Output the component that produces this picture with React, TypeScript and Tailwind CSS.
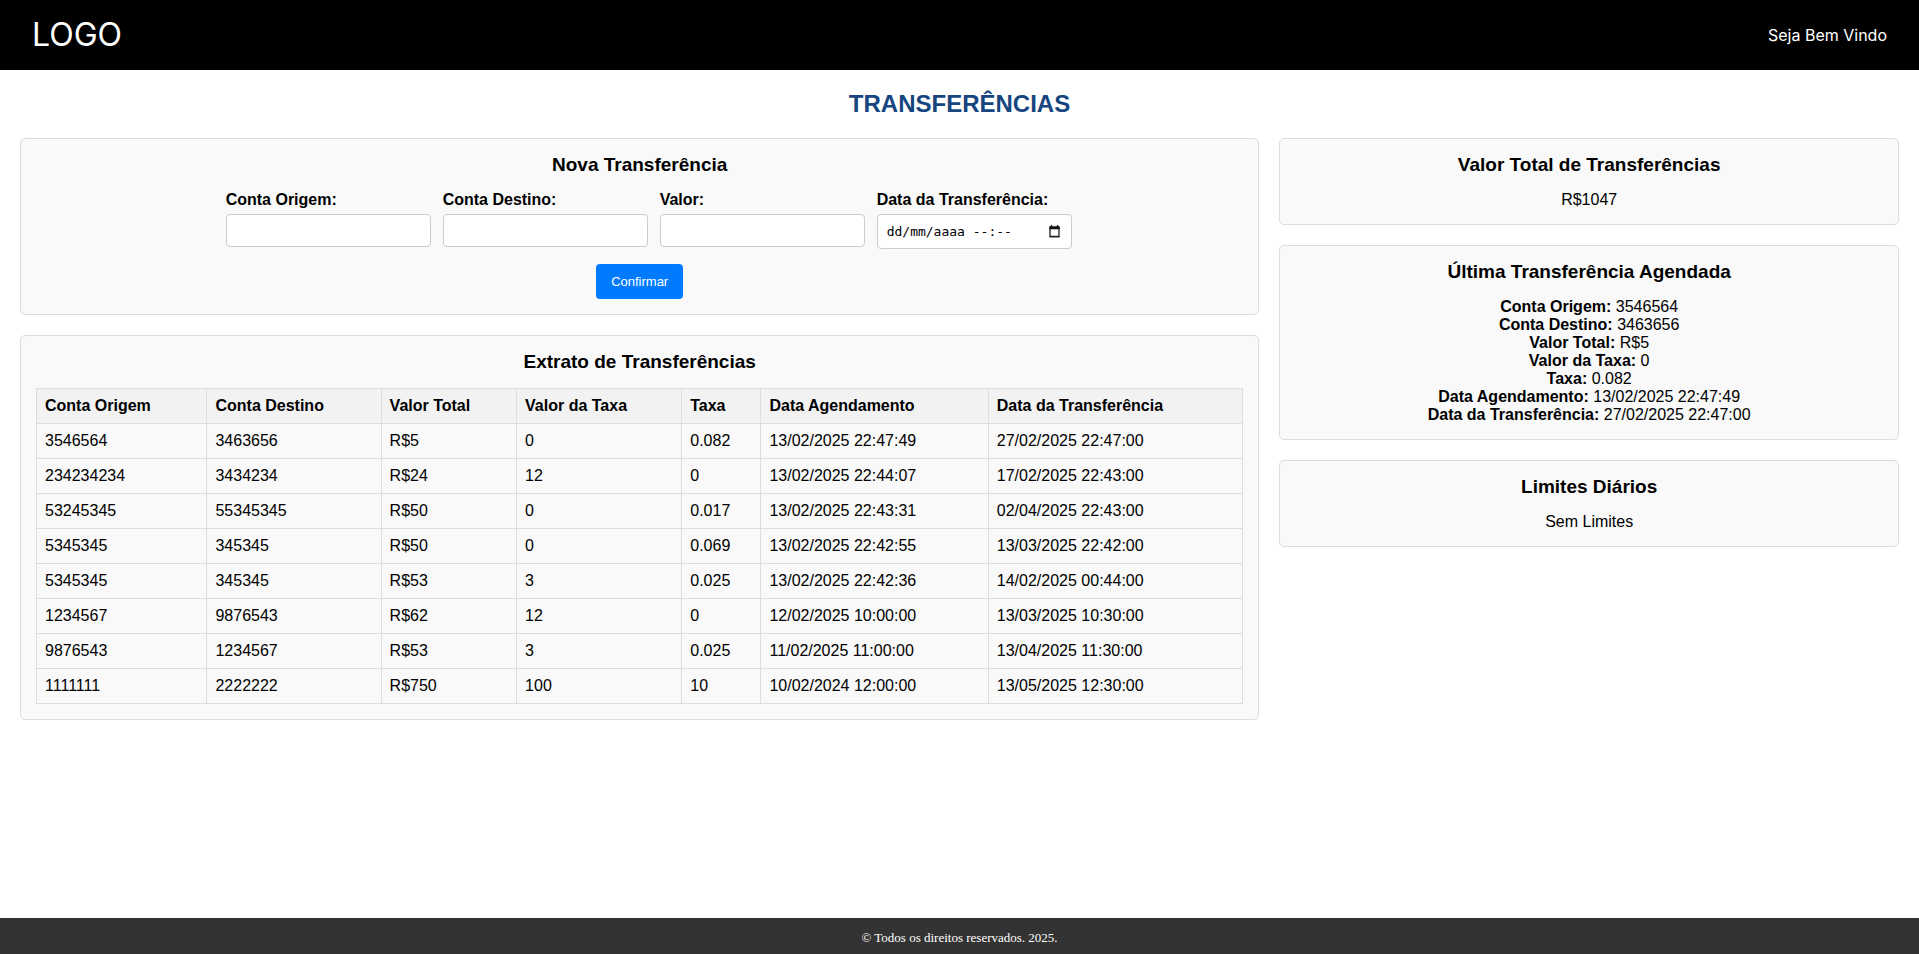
import type { ReactNode } from "react";

const columns = [
  "Conta Origem",
  "Conta Destino",
  "Valor Total",
  "Valor da Taxa",
  "Taxa",
  "Data Agendamento",
  "Data da Transferência",
];

const transfers = [
  ["3546564", "3463656", "R$5", "0", "0.082", "13/02/2025 22:47:49", "27/02/2025 22:47:00"],
  ["234234234", "3434234", "R$24", "12", "0", "13/02/2025 22:44:07", "17/02/2025 22:43:00"],
  ["53245345", "55345345", "R$50", "0", "0.017", "13/02/2025 22:43:31", "02/04/2025 22:43:00"],
  ["5345345", "345345", "R$50", "0", "0.069", "13/02/2025 22:42:55", "13/03/2025 22:42:00"],
  ["5345345", "345345", "R$53", "3", "0.025", "13/02/2025 22:42:36", "14/02/2025 00:44:00"],
  ["1234567", "9876543", "R$62", "12", "0", "12/02/2025 10:00:00", "13/03/2025 10:30:00"],
  ["9876543", "1234567", "R$53", "3", "0.025", "11/02/2025 11:00:00", "13/04/2025 11:30:00"],
  ["1111111", "2222222", "R$750", "100", "10", "10/02/2024 12:00:00", "13/05/2025 12:30:00"],
];

function Card({ title, children }: { title: string; children: ReactNode }) {
  return (
    <section className="rounded-[5px] border border-[#dddddd] bg-[#f9f9f9] p-[15px]">
      <h2 className="mb-[15px] text-center text-[19px] leading-[22px] font-bold">{title}</h2>
      {children}
    </section>
  );
}

function Field({ id, label }: { id: string; label: string }) {
  return (
    <div className="flex flex-col items-start gap-[5px]">
      <label htmlFor={id} className="font-bold">
        {label}
      </label>
      <input
        id={id}
        type="text"
        className="h-[33px] w-[205px] rounded-[4px] border border-[#cccccc] bg-white px-2 text-[13px]"
      />
    </div>
  );
}

function DateField() {
  return (
    <div className="flex flex-col items-start gap-[5px]">
      <label htmlFor="data" className="font-bold">
        Data da Transferência:
      </label>
      <div className="flex h-[35px] w-[195px] items-center rounded-[4px] border border-[#cccccc] bg-white pr-[10px] pl-[9px]">
        <input
          id="data"
          type="text"
          placeholder="dd/mm/aaaa --:--"
          className="min-w-0 flex-1 bg-transparent font-['DejaVu_Sans_Mono',monospace] text-[13px] leading-[16px] outline-none placeholder:text-black placeholder:opacity-100"
        />
        <button type="button" aria-label="Abrir calendário">
          <svg width="13" height="13" viewBox="0 0 13 13" fill="none">
            <path d="M2 3v8.5h9V3" stroke="#222" strokeWidth="1.3" />
            <path d="M1.35 11.85h10.3" stroke="#222" strokeWidth="0.8" />
            <path d="M1.3 1.2h1.5V0h1.3v1.2h4.8V0h1.3v1.2h1.5v3H1.3z" fill="#111" />
          </svg>
        </button>
      </div>
    </div>
  );
}

function Detail({ label, value }: { label: string; value: string }) {
  return (
    <p>
      <strong>{label}:</strong> {value}
    </p>
  );
}

export default function App() {
  return (
    <div className="flex min-h-screen flex-col bg-white font-['Liberation_Sans',Arial,sans-serif] text-[16px] leading-[18px] text-black">
      <header className="flex h-[70px] items-center justify-between bg-black px-8 font-['Inter',sans-serif] text-white">
        <span className="text-[32px] leading-[40px]">LOGO</span>
        <span className="text-[16px] leading-[20px]">Seja Bem Vindo</span>
      </header>

      <main className="flex-1 p-5">
        <h1 className="mb-5 text-center text-[24px] leading-[28px] font-bold text-[#164580]">
          TRANSFERÊNCIAS
        </h1>
        <div className="grid grid-cols-[2fr_1fr] items-start gap-5">
          <div className="flex flex-col gap-5">
            <Card title="Nova Transferência">
              <form className="flex flex-col items-center gap-[15px]">
                <div className="flex items-start gap-3 pl-[18px]">
                  <Field id="origem" label="Conta Origem:" />
                  <Field id="destino" label="Conta Destino:" />
                  <Field id="valor" label="Valor:" />
                  <DateField />
                </div>
                <button
                  type="button"
                  className="h-[35px] rounded-[4px] bg-[#007bff] px-[15px] text-[13px] text-white"
                >
                  Confirmar
                </button>
              </form>
            </Card>

            <Card title="Extrato de Transferências">
              <table className="w-full border-collapse text-left">
                <thead>
                  <tr className="bg-[#f2f2f2]">
                    {columns.map((name) => (
                      <th key={name} scope="col" className="border border-[#dddddd] p-2 font-bold">
                        {name}
                      </th>
                    ))}
                  </tr>
                </thead>
                <tbody>
                  {transfers.map((row) => (
                    <tr key={row[5]}>
                      {row.map((value, i) => (
                        <td key={columns[i]} className="border border-[#dddddd] p-2">
                          {value}
                        </td>
                      ))}
                    </tr>
                  ))}
                </tbody>
              </table>
            </Card>
          </div>

          <aside className="flex flex-col gap-5 text-center">
            <Card title="Valor Total de Transferências">
              <p>R$1047</p>
            </Card>
            <Card title="Última Transferência Agendada">
              {columns.map((name, i) => (
                <Detail key={name} label={name} value={transfers[0][i]} />
              ))}
            </Card>
            <Card title="Limites Diários">
              <p>Sem Limites</p>
            </Card>
          </aside>
        </div>
      </main>

      <footer className="bg-[#333333] pt-3 pb-2 text-center font-['Liberation_Serif','Times_New_Roman',serif] text-[13px] leading-[16px] text-white">
        © Todos os direitos reservados. 2025.
      </footer>
    </div>
  );
}
